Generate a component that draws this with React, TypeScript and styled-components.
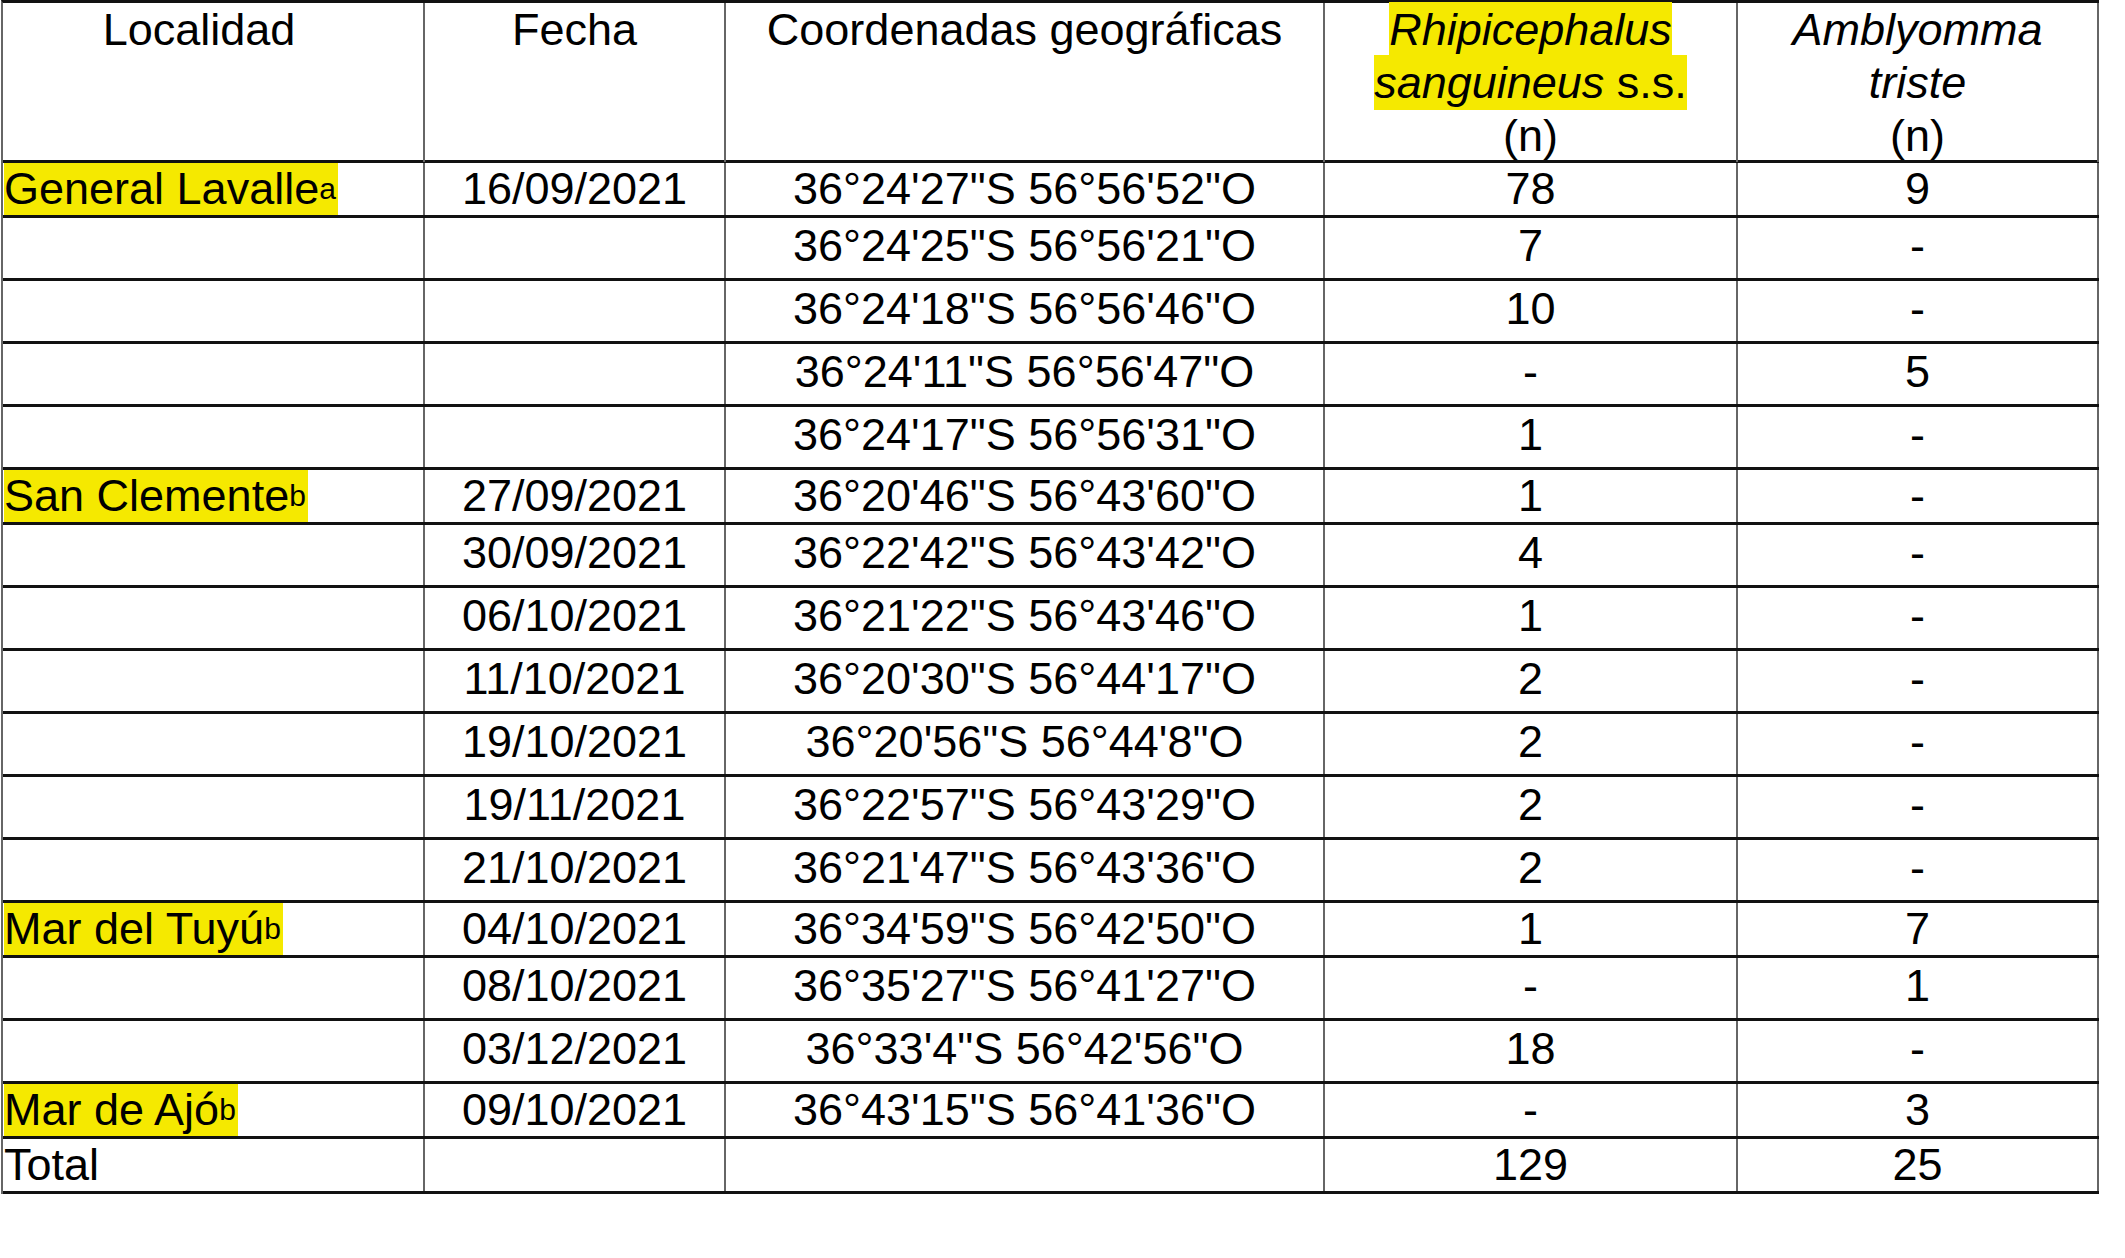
import React from 'react'
import styled, { createGlobalStyle } from 'styled-components'

const GlobalStyle = createGlobalStyle`
  html, body {
    margin: 0;
    padding: 0;
    background: #fff;
  }
  body {
    font-family: 'Liberation Sans', Arial, sans-serif;
    color: #000;
  }
`

const COLUMNS = '422px 301px 599px 413px 361px'

const Sheet = styled.div`
  width: 2098px;
  margin-left: 1px;
  border-top: 3px solid #111;
  border-left: 2px solid #666;
  box-sizing: border-box;
  box-shadow: 0 2px 0 #a8a8a8;
`

const HeaderRow = styled.div`
  display: grid;
  grid-template-columns: ${COLUMNS};
  height: 160px;
  box-sizing: border-box;
  border-bottom: 3px solid #111;
`

// taller rows sit their text a touch above the middle, as in the source sheet
const Row = styled.div<{ $tall?: boolean }>`
  display: grid;
  grid-template-columns: ${COLUMNS};
  height: ${({ $tall }) => ($tall ? '63px' : '55px')};
  box-sizing: border-box;
  border-bottom: 3px solid #111;

  & > * {
    padding-bottom: ${({ $tall }) => ($tall ? '4px' : '0')};
  }
`

const HeadCell = styled.div<{ $shift?: number }>`
  box-sizing: border-box;
  border-right: 2px solid #666;
  padding-right: ${({ $shift }) => $shift ?? 0}px;
  text-align: center;
  font-size: 45px;
  line-height: 53px;
  white-space: nowrap;
`

const Cell = styled.div<{ $left?: boolean }>`
  box-sizing: border-box;
  border-right: 2px solid #666;
  display: flex;
  align-items: center;
  justify-content: ${({ $left }) => ($left ? 'flex-start' : 'center')};
  padding-left: ${({ $left }) => ($left ? '1px' : '0')};
  font-size: 45px;
  line-height: 1.15;
  white-space: nowrap;
`

const HeadMark = styled.span`
  background: #f5e900;
  padding: 2px 0;
  box-decoration-break: clone;
  -webkit-box-decoration-break: clone;
`

const Mark = styled.span`
  align-self: stretch;
  display: inline-flex;
  align-items: center;
  background: #f5e900;
  padding-right: 2px;
`

const Sup = styled.sup`
  font-size: 30px;
  line-height: 0;
  vertical-align: 17px;
`

const Species = styled.i`
  font-style: italic;
`

type Entry = {
  place?: string
  note?: string
  date?: string
  coord?: string
  rs?: string
  at?: string
  tall?: boolean
}

const ENTRIES: Entry[] = [
  { place: 'General Lavalle', note: 'a', date: '16/09/2021', coord: `36°24'27"S 56°56'52"O`, rs: '78', at: '9' },
  { coord: `36°24'25"S 56°56'21"O`, rs: '7', at: '-', tall: true },
  { coord: `36°24'18"S 56°56'46"O`, rs: '10', at: '-', tall: true },
  { coord: `36°24'11"S 56°56'47"O`, rs: '-', at: '5', tall: true },
  { coord: `36°24'17"S 56°56'31"O`, rs: '1', at: '-', tall: true },
  { place: 'San Clemente', note: 'b', date: '27/09/2021', coord: `36°20'46"S 56°43'60"O`, rs: '1', at: '-' },
  { date: '30/09/2021', coord: `36°22'42"S 56°43'42"O`, rs: '4', at: '-', tall: true },
  { date: '06/10/2021', coord: `36°21'22"S 56°43'46"O`, rs: '1', at: '-', tall: true },
  { date: '11/10/2021', coord: `36°20'30"S 56°44'17"O`, rs: '2', at: '-', tall: true },
  { date: '19/10/2021', coord: `36°20'56"S 56°44'8"O`, rs: '2', at: '-', tall: true },
  { date: '19/11/2021', coord: `36°22'57"S 56°43'29"O`, rs: '2', at: '-', tall: true },
  { date: '21/10/2021', coord: `36°21'47"S 56°43'36"O`, rs: '2', at: '-', tall: true },
  { place: 'Mar del Tuyú', note: 'b', date: '04/10/2021', coord: `36°34'59"S 56°42'50"O`, rs: '1', at: '7' },
  { date: '08/10/2021', coord: `36°35'27"S 56°41'27"O`, rs: '-', at: '1', tall: true },
  { date: '03/12/2021', coord: `36°33'4"S 56°42'56"O`, rs: '18', at: '-', tall: true },
  { place: 'Mar de Ajó', note: 'b', date: '09/10/2021', coord: `36°43'15"S 56°41'36"O`, rs: '-', at: '3' },
]

export default function App() {
  return (
    <>
      <GlobalStyle />
      <Sheet>
        <HeaderRow>
          <HeadCell $shift={28}>Localidad</HeadCell>
          <HeadCell>Fecha</HeadCell>
          <HeadCell>Coordenadas geográficas</HeadCell>
          <HeadCell>
            <HeadMark>
              <Species>Rhipicephalus</Species>
              <br />
              <Species>sanguineus</Species> s.s.
            </HeadMark>
            <br />
            (n)
          </HeadCell>
          <HeadCell>
            <Species>Amblyomma</Species>
            <br />
            <Species>triste</Species>
            <br />
            (n)
          </HeadCell>
        </HeaderRow>

        {ENTRIES.map((e, i) => (
          <Row key={i} $tall={e.tall}>
            <Cell $left>
              {e.place && (
                <Mark>
                  {e.place}
                  <Sup>{e.note}</Sup>
                </Mark>
              )}
            </Cell>
            <Cell>{e.date}</Cell>
            <Cell>{e.coord}</Cell>
            <Cell>{e.rs}</Cell>
            <Cell>{e.at}</Cell>
          </Row>
        ))}

        <Row>
          <Cell $left>Total</Cell>
          <Cell />
          <Cell />
          <Cell>129</Cell>
          <Cell>25</Cell>
        </Row>
      </Sheet>
    </>
  )
}
